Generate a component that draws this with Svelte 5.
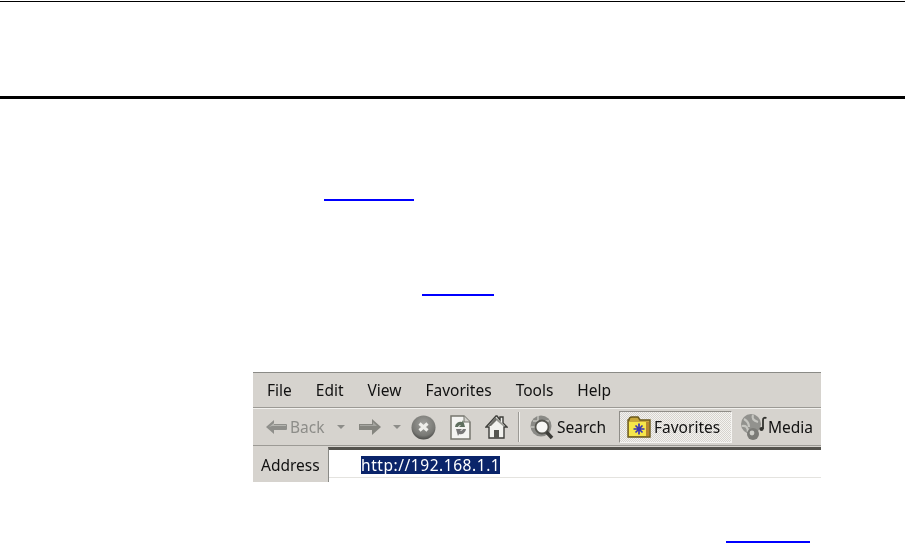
<script>
   // Menu and toolbar labels of the browser capture
   const menus = ["File", "Edit", "View", "Favorites", "Tools", "Help"];
</script>

<div class="page">
    <div class="top-rule"></div>
    <div class="heavy-rule"></div>

    <div class="link-row first"><span class="link one"></span></div>
    <div class="link-row second"><span class="link two"></span></div>

    <div class="capture">
        <div class="menubar">
            {#each menus as menu}
                <span>{menu}</span>
            {/each}
        </div>

        <div class="toolbar">
            <svg class="back" width="21" height="14" viewBox="0 0 21 14">
                <path d="M0 7 L8 0 V4 H20 Q21 4 21 5 V9 Q21 10 20 10 H8 V14 Z" fill="#8f8f8b"/>
                <path d="M3 7 L8 3 V5 H20 V6 H6 Z" fill="#b5b5b0"/>
            </svg>
            <span class="muted">Back</span>
            <span class="caret c1"></span>
            <svg class="forward" width="22" height="16" viewBox="0 0 22 16">
                <path d="M22 8 L13 0 V5 H0 V11 H13 V16 Z" fill="#85857f"/>
                <path d="M1 6 H14 V3 L18 7 H1 Z" fill="#a5a5a0"/>
            </svg>
            <span class="caret c2"></span>

            <svg class="stop" width="25" height="25" viewBox="0 0 25 25">
                <defs>
                    <radialGradient id="stopFill" cx="50%" cy="35%" r="65%">
                        <stop offset="0%" stop-color="#a0a09c"/>
                        <stop offset="75%" stop-color="#787874"/>
                        <stop offset="100%" stop-color="#4d4d4a"/>
                    </radialGradient>
                </defs>
                <circle cx="12.5" cy="12.5" r="12" fill="url(#stopFill)"/>
                <path d="M8.5 8.5 L16.5 15.5 M16.5 8.5 L8.5 15.5" stroke="#eeeeea" stroke-width="3.2"/>
            </svg>

            <svg class="refresh" width="21" height="25" viewBox="0 0 21 25">
                <path d="M1 1 H14 L20 7 V24 H1 Z" fill="#f4f4f2" stroke="#77776f" stroke-width="1.5"/>
                <path d="M14 1 V7 H20" fill="#d0d0cb" stroke="#77776f"/>
                <path d="M5 12 A5.5 5.5 0 0 1 12 7 L13 5 L15 12 H9 L11 10 A3 3 0 0 0 8 12 Z" fill="#5f6f5f"/>
                <path d="M16 14 A5.5 5.5 0 0 1 9 19 L8 21 L6 14 H12 L10 16 A3 3 0 0 0 13 14 Z" fill="#777"/>
            </svg>

            <svg class="home" width="23" height="24" viewBox="0 0 23 24">
                <path d="M11 1 L1 12 H4 V23 H19 V12 H22 L18 8 V2 H15 V5 L12 1 Z" fill="#f2f2ee" stroke="#3e3e3a" stroke-width="1.4"/>
                <path d="M11 2 L3 11 H6 L12 5 Z" fill="#6e6e68"/>
                <path d="M12 3 L20 11 H18 L12 6 Z" fill="#9a9a94"/>
                <rect x="9" y="15" width="5" height="8" fill="#55554f"/>
            </svg>

            <span class="divider"></span>

            <svg class="search-icon" width="24" height="25" viewBox="0 0 24 25">
                <circle cx="11" cy="11" r="10.5" fill="#8a8a86"/>
                <path d="M3 6 H19 M1 12 H7 M8 1 V8" stroke="#c4c4bf" stroke-width="1.5"/>
                <circle cx="12" cy="12" r="6.5" fill="#f7f7f5" stroke="#55554f" stroke-width="1.8"/>
                <path d="M16.5 17 L22 23" stroke="#3d3d39" stroke-width="3.5"/>
            </svg>
            <span class="label search">Search</span>

            <div class="fav-button">
                <svg width="24" height="22" viewBox="0 0 24 22">
                    <path d="M2 4 Q2 1 5 1 H11 L13 4 H23 V21 H1 V4 Z" fill="#c9a83a" stroke="#6b5a1c" stroke-width="1.4"/>
                    <rect x="2" y="6" width="20" height="14" fill="#f6e64a"/>
                    <path d="M12 7.5 V18.5 M6.5 13 H17.5 M8.5 9.5 L15.5 16.5 M15.5 9.5 L8.5 16.5" stroke="#3a35b5" stroke-width="1.7"/>
                    <rect x="19" y="6" width="3" height="14" fill="#b8872e"/>
                </svg>
                <span class="label">Favorites</span>
            </div>

            <svg class="media-icon" width="27" height="27" viewBox="0 0 27 27">
                <circle cx="11" cy="10" r="10" fill="#92928e"/>
                <path d="M4 5 Q9 8 9 13 M13 1 Q11 6 18 8 M2 12 Q8 11 8 18" fill="none" stroke="#c6c6c1" stroke-width="2.2"/>
                <circle cx="13" cy="20" r="6" fill="#7b7b77"/>
                <circle cx="12" cy="19" r="2.4" fill="#cfcfca"/>
                <path d="M23 15 V6 Q23 3 26.5 4" fill="none" stroke="#33332f" stroke-width="1.8"/>
                <circle cx="21.5" cy="15" r="2.1" fill="#33332f"/>
            </svg>
            <span class="label media">Media</span>
        </div>

        <div class="addressbar">
            <span class="address-label">Address</span>
            <div class="field"><span class="url">http://192.168.1.1</span></div>
        </div>
    </div>

    <div class="link-row third"><span class="link three"></span></div>
</div>

<style>
    :global(body) {
        margin: 0;
        background: #fff;
    }

    .page {
        width: 905px;
        height: 543px;
        overflow: hidden;
        display: flow-root;
    }

    .top-rule {
        height: 1px;
        margin-top: 1px;
        background: #000;
    }

    .heavy-rule {
        height: 3px;
        margin-top: 94px;
        background: #000;
    }

    .link-row {
        display: flex;
        height: 2px;
    }

    .link {
        display: block;
        height: 2px;
        background: #0000ff;
    }

    .first { margin-top: 100px; }
    .second { margin-top: 93px; }
    .third { margin-top: 59px; }

    .one { margin-left: 324px; width: 90px; }
    .two { margin-left: 422px; width: 72px; }
    .three { margin-left: 726px; width: 84px; }

    .capture {
        margin: 76px 0 0 253px;
        width: 568px;
        height: 110px;
        background: #d6d3ce;
        font-family: "Noto Sans", sans-serif;
        font-size: 15.5px;
        color: #111;
        filter: blur(0.45px);
        box-sizing: border-box;
        border-top: 1px solid #8a8a86;
        overflow: hidden;
    }

    .menubar {
        height: 35px;
        display: flex;
        align-items: center;
        gap: 24px;
        padding-left: 14px;
        box-sizing: border-box;
        border-bottom: 1px solid #9c9a95;
    }

    .toolbar {
        height: 38px;
        display: flex;
        align-items: center;
        box-sizing: border-box;
        border-top: 1px solid #f2f1ee;
        border-bottom: 1px solid #9c9a95;
    }

    .back { margin-left: 13px; }
    .muted { margin-left: 3px; color: #8d8d89; width: 34px; }

    .caret {
        width: 0;
        height: 0;
        border-left: 4px solid transparent;
        border-right: 4px solid transparent;
        border-top: 4px solid #8d8d89;
    }

    .c1 { margin-left: 13px; }
    .forward { margin-left: 14px; }
    .c2 { margin-left: 12px; }
    .stop { margin-left: 10px; }
    .refresh { margin-left: 14px; }
    .home { margin-left: 14px; }

    .divider {
        width: 1px;
        height: 30px;
        margin-left: 10px;
        background: #9c9a95;
        border-right: 1px solid #f2f1ee;
    }

    .search-icon { margin-left: 10px; }
    .search { margin-left: 3px; width: 50px; }

    .label {
        white-space: nowrap;
    }

    .fav-button {
        display: flex;
        align-items: center;
        gap: 3px;
        width: 113px;
        height: 32px;
        margin-left: 12px;
        padding-left: 7px;
        box-sizing: border-box;
        background: repeating-conic-gradient(#f4f3f0 0 25%, #d6d3ce 0 50%) 0 0 / 2px 2px;
        border: 1px solid;
        border-color: #8f8d88 #f5f4f1 #f5f4f1 #8f8d88;
    }

    .media-icon { margin-left: 8px; }
    .media { margin-left: 1px; }

    .addressbar {
        height: 36px;
        display: flex;
        align-items: flex-start;
    }

    .address-label {
        margin: 8px 0 0 8px;
        width: 67px;
    }

    .field {
        flex: 1;
        height: 35px;
        margin-top: 1px;
        background: linear-gradient(#fff 27px, #e4e3df 27px, #e4e3df 28px, #fff 28px);
        border-top: 3px solid #55534e;
        border-left: 1px solid #8a8a86;
        box-sizing: border-box;
        padding: 6px 0 0 32px;
        line-height: 18px;
    }

    .url {
        display: block;
        width: max-content;
        background: #0a246a;
        color: #fff;
        line-height: 18px;
        letter-spacing: 0.55px;
    }
</style>
